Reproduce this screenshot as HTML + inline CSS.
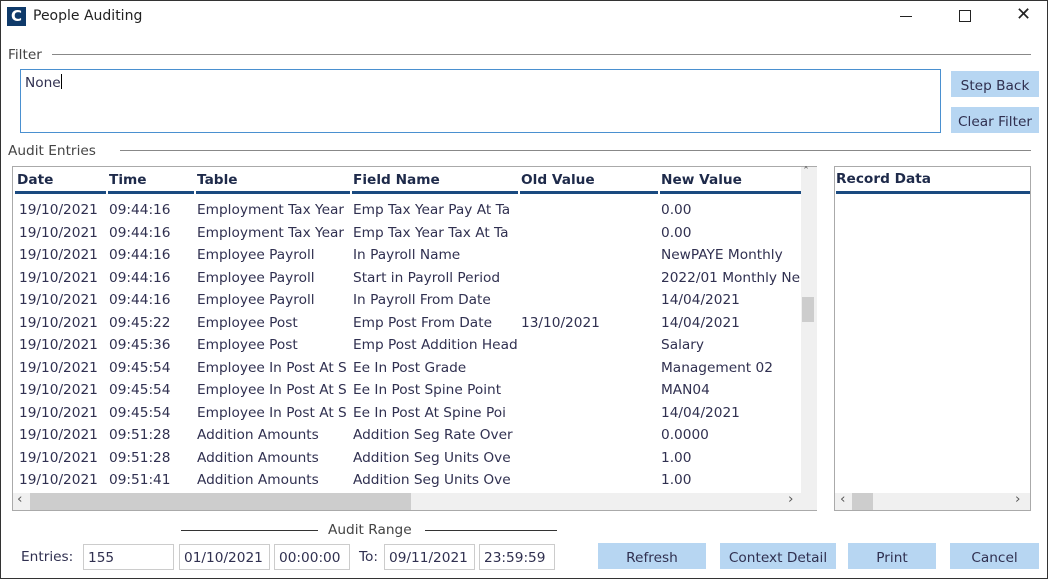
<!DOCTYPE html>
<html><head><style>
*{box-sizing:border-box;margin:0;padding:0}
body{width:1048px;height:579px;overflow:hidden;background:#fff;font-family:"DejaVu Sans","Liberation Sans",sans-serif;font-size:13.7px;color:#303050;position:relative}
.a{position:absolute;white-space:nowrap}
.win{position:absolute;left:0;top:0;width:1048px;height:579px;border:1px solid #333}
.btn{position:absolute;background:#b7d6f2;text-align:center;line-height:30px;height:26px;color:#303050}
.hl{position:absolute;height:1px;background:#888}
.inp{position:absolute;border:1px solid #ccc;height:26px;line-height:26px;padding-left:4px}
.hd{font-weight:bold;color:#1e2a4a}
.ul{position:absolute;height:3px;background:#1a4a80;top:191px}
</style></head><body>
<div class="win"></div>
<div class="a" style="left:7px;top:7px;width:19px;height:19px;background:#0f3a6a;color:#fff;font-weight:bold;font-size:15px;text-align:center;line-height:19px">C</div>
<div class="a" style="left:33px;top:8px;font-size:14px;color:#222">People Auditing</div>
<div class="a" style="left:900px;top:16px;width:12px;height:1px;background:#222"></div>
<div class="a" style="left:959px;top:10px;width:12px;height:12px;border:1px solid #222"></div>
<div class="a" style="left:1016px;top:4px;font-size:18px;color:#222">✕</div>

<div class="a" style="left:8px;top:47px;color:#444">Filter</div>
<div class="hl" style="left:52px;top:54px;width:979px"></div>
<div class="a" style="left:20px;top:69px;width:921px;height:64px;border:1px solid #4a90d0"></div>
<div class="a" style="left:25px;top:74px">None<span style="display:inline-block;width:1px;height:15px;background:#000;vertical-align:-2px"></span></div>
<div class="btn" style="left:951px;top:71px;width:88px">Step Back</div>
<div class="btn" style="left:951px;top:107px;width:88px">Clear Filter</div>

<div class="a" style="left:8px;top:143px;color:#444">Audit Entries</div>
<div class="hl" style="left:120px;top:150px;width:911px"></div>

<div class="a" style="left:12px;top:166px;width:805px;height:345px;border:1px solid #aaa;border-right:none"></div>
<div class="a hd" style="left:17px;top:172px">Date</div>
<div class="a hd" style="left:109px;top:172px">Time</div>
<div class="a hd" style="left:197px;top:172px">Table</div>
<div class="a hd" style="left:353px;top:172px">Field Name</div>
<div class="a hd" style="left:521px;top:172px">Old Value</div>
<div class="a hd" style="left:661px;top:172px">New Value</div>
<div class="ul" style="left:15px;width:91px"></div>
<div class="ul" style="left:108px;width:86px"></div>
<div class="ul" style="left:196px;width:154px"></div>
<div class="ul" style="left:352px;width:166px"></div>
<div class="ul" style="left:520px;width:138px"></div>
<div class="ul" style="left:660px;width:142px"></div>

<div style="position:absolute;left:0;top:0">
<div class="a" style="left:19px;top:199px;line-height:22.5px">19/10/2021<br>19/10/2021<br>19/10/2021<br>19/10/2021<br>19/10/2021<br>19/10/2021<br>19/10/2021<br>19/10/2021<br>19/10/2021<br>19/10/2021<br>19/10/2021<br>19/10/2021<br>19/10/2021</div>
<div class="a" style="left:109px;top:199px;line-height:22.5px">09:44:16<br>09:44:16<br>09:44:16<br>09:44:16<br>09:44:16<br>09:45:22<br>09:45:36<br>09:45:54<br>09:45:54<br>09:45:54<br>09:51:28<br>09:51:28<br>09:51:41</div>
<div class="a" style="left:197px;top:199px;line-height:22.5px;width:154px;overflow:hidden">Employment Tax Year<br>Employment Tax Year<br>Employee Payroll<br>Employee Payroll<br>Employee Payroll<br>Employee Post<br>Employee Post<br>Employee In Post At S<br>Employee In Post At S<br>Employee In Post At S<br>Addition Amounts<br>Addition Amounts<br>Addition Amounts</div>
<div class="a" style="left:353px;top:199px;line-height:22.5px;width:166px;overflow:hidden">Emp Tax Year Pay At Ta<br>Emp Tax Year Tax At Ta<br>In Payroll Name<br>Start in Payroll Period<br>In Payroll From Date<br>Emp Post From Date<br>Emp Post Addition Head<br>Ee In Post Grade<br>Ee In Post Spine Point<br>Ee In Post At Spine Poi<br>Addition Seg Rate Over<br>Addition Seg Units Ove<br>Addition Seg Units Ove</div>
<div class="a" style="left:521px;top:311.5px;line-height:22.5px">13/10/2021</div>
<div class="a" style="left:661px;top:199px;line-height:22.5px;width:140px;overflow:hidden">0.00<br>0.00<br>NewPAYE Monthly<br>2022/01 Monthly Ne<br>14/04/2021<br>14/04/2021<br>Salary<br>Management 02<br>MAN04<br>14/04/2021<br>0.0000<br>1.00<br>1.00</div>
</div>

<div class="a" style="left:801px;top:167px;width:16px;height:326px;background:#f0f0f0"></div>
<div class="a" style="left:803px;top:165px;font-size:12px;color:#555">ˆ</div>
<div class="a" style="left:802px;top:297px;width:12px;height:25px;background:#cdcdcd"></div>
<div class="a" style="left:13px;top:493px;width:804px;height:17px;background:#f0f0f0"></div>
<div class="a" style="left:30px;top:493px;width:381px;height:17px;background:#cdcdcd"></div>
<div class="a" style="left:17px;top:491px;color:#555">‹</div>
<div class="a" style="left:788px;top:491px;color:#555">›</div>

<div class="a" style="left:834px;top:166px;width:197px;height:345px;border:1px solid #aaa"></div>
<div class="a hd" style="left:836px;top:171px">Record Data</div>
<div class="a" style="left:836px;top:191px;width:194px;height:3px;background:#1a4a80"></div>
<div class="a" style="left:835px;top:493px;width:195px;height:17px;background:#f0f0f0"></div>
<div class="a" style="left:852px;top:493px;width:21px;height:17px;background:#cdcdcd"></div>
<div class="a" style="left:840px;top:491px;color:#555">‹</div>
<div class="a" style="left:1015px;top:491px;color:#555">›</div>

<div class="a" style="left:328px;top:522px;color:#444">Audit Range</div>
<div class="a" style="left:181px;top:530px;width:137px;height:1px;background:#333"></div>
<div class="a" style="left:425px;top:530px;width:132px;height:1px;background:#333"></div>
<div class="a" style="left:21px;top:549px">Entries:</div>
<div class="inp" style="left:83px;top:544px;width:91px">155</div>
<div class="inp" style="left:179px;top:544px;width:91px">01/10/2021</div>
<div class="inp" style="left:274px;top:544px;width:76px">00:00:00</div>
<div class="a" style="left:359px;top:549px">To:</div>
<div class="inp" style="left:384px;top:544px;width:91px">09/11/2021</div>
<div class="inp" style="left:479px;top:544px;width:76px">23:59:59</div>
<div class="btn" style="left:598px;top:543px;width:108px">Refresh</div>
<div class="btn" style="left:720px;top:543px;width:116px">Context Detail</div>
<div class="btn" style="left:848px;top:543px;width:88px">Print</div>
<div class="btn" style="left:950px;top:543px;width:89px">Cancel</div>
</body></html>
